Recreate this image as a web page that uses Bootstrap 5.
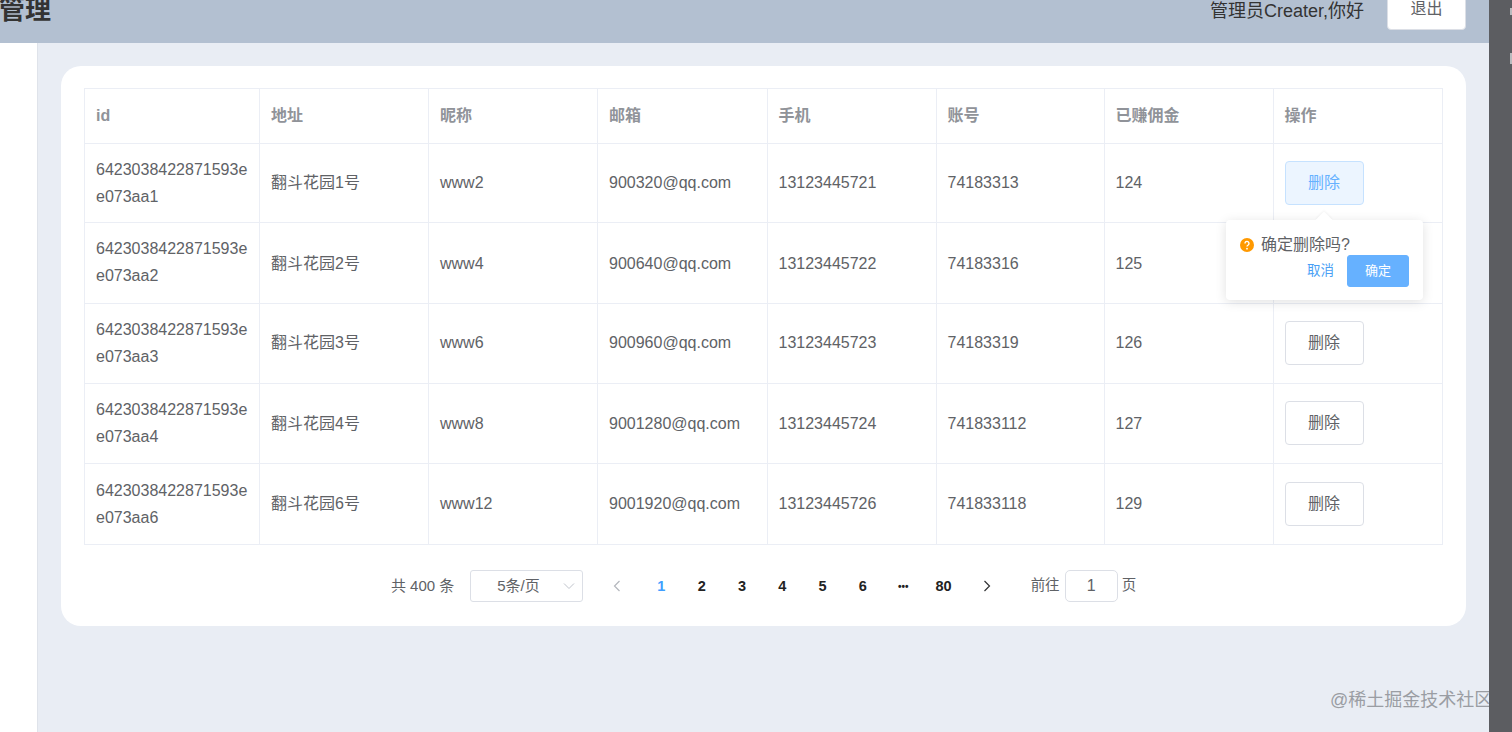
<!DOCTYPE html>
<html lang="zh-CN">
<head>
<meta charset="utf-8">
<title>管理</title>
<link rel="stylesheet" href="https://cdn.jsdelivr.net/npm/bootstrap@5.3.0/dist/css/bootstrap.min.css">
<style>
html,body{height:732px;overflow:hidden;background:#e9edf4}
body{font-family:"Liberation Sans","Noto Sans CJK SC",sans-serif;color:#606266;font-size:16px}
.shell{height:732px}
.scroll-strip{width:23px;background:#5c5d61;flex:none;position:relative}
.strip-mark{position:absolute;right:0;width:2px;background:#b9babd}
.strip-mark.mark-one{top:8px;height:7px}
.strip-mark.mark-two{top:53px;height:11px}
.page-col{width:1489px;flex:none;height:749px;margin-top:-17px}
.top-bar{height:60px;background:#b3c0d1;padding:0 23px 0 0;flex:none}
.brand-title{font-size:26px;font-weight:700;color:#333;margin:0 0 0 -1px;line-height:32px;padding-top:11px}
.greeting{font-size:18px;color:#333;margin:15px 23px 0 0}
.logout-btn{width:79px;height:47px;background:#fff;border:1px solid #dcdfe6;border-radius:4px;font-size:16px;color:#606266;padding:5px 0 0}
.side-rail{width:38px;background:#fff;border-right:1px solid #dfe3ea;flex:none}
.main-pane{padding:23px 23px 23px 23px;flex:1;min-width:0;position:relative}
.panel{background:#fff;border-radius:20px;width:1405px;height:560px;padding:22px 23px 0;position:relative}
.data-table{--bs-table-border-color:#ebeef5;--bs-table-color:#606266;table-layout:fixed;width:1358px;margin:0;font-size:16px;line-height:27px}
.data-table th{color:#909399;font-weight:700;height:55px;padding:0 11px 2px;vertical-align:middle}
.data-table td{height:80px;padding:0 11px 0;vertical-align:middle;word-break:break-all}
.data-table tbody tr:nth-child(1) td{height:79px;padding-bottom:2px}
.data-table tbody tr:nth-child(2) td{height:81px}
.data-table tbody tr:nth-child(3) td{padding-bottom:2px}
.data-table tbody tr:nth-child(5) td{height:81px;padding-bottom:2px}
.data-table tbody tr:nth-child(2) td:first-child,.data-table tbody tr:nth-child(4) td:first-child{padding-bottom:2px}
.data-table tbody tr:nth-child(1) td:first-child,.data-table tbody tr:nth-child(5) td:first-child{padding-bottom:0}
.data-table tbody tr:nth-child(4) td:last-child{padding-bottom:2px}
.data-table tbody tr:nth-child(1) td:last-child,.data-table tbody tr:nth-child(5) td:last-child{padding-bottom:0}
.col-a{width:175px}.col-b{width:169px}.col-c{width:169.5px}.col-d{width:168px}
.del-btn{width:79px;height:44px;background:#fff;border:1px solid #dcdfe6;border-radius:4px;color:#606266;font-size:16px;padding:0}
.del-btn.is-hot{background:#ecf5ff;border-color:#c6e2ff;color:#66b1ff}
.confirm-pop{position:absolute;left:1165px;top:154px;width:197px;height:80px;background:#fff;border-radius:4px;box-shadow:0 2px 12px rgba(0,0,0,.12);padding:15px 14px 0;z-index:5}
.confirm-pop::before{content:"";position:absolute;left:92px;top:-6px;width:12px;height:12px;background:#fff;transform:rotate(45deg);box-shadow:-1px -1px 2px rgba(0,0,0,.04)}
.pop-text{font-size:16px;line-height:20px;color:#606266;position:relative}
.pop-icon{width:14px;height:14px;margin-right:7px;flex:none}
.pop-actions{margin-top:0;position:relative}
.pop-cancel{color:#4a9ff5;font-size:13.5px;margin-right:13px}
.pop-ok{width:62px;height:32px;background:#66b1ff;border:1px solid #66b1ff;border-radius:3px;color:#fff;font-size:13px;padding:0}
.pager-row{height:82px;font-size:14.5px;color:#606266}
.pager-total{margin-right:16px;font-size:15px}
.size-box{width:113px;height:32px;border:1px solid #dcdfe6;border-radius:3px;padding:0 7px 0 26px;color:#606266;font-size:15px;margin-right:10px}
.pager-list{--bs-pagination-bg:transparent;--bs-pagination-border-width:0;--bs-pagination-color:#222;--bs-pagination-padding-x:0;--bs-pagination-padding-y:0;margin:0;align-items:center}
.pager-list .page-link{width:40.3px;height:32px;line-height:32px;text-align:center;font-size:14.5px;font-weight:700;color:#222;background:transparent;margin-left:0!important}
.pager-list .page-item.active .page-link{color:#409eff;background:transparent}
.pager-list .page-item:first-child .page-link{width:48px}
.pager-list .page-item:last-child .page-link{width:46px}
.pager-list .page-item .page-link svg{vertical-align:-1px}
.dots-glyph{font-size:10px;letter-spacing:0;vertical-align:1px}
.jump-box{margin-left:21px}
.jump-input{width:53px;height:32px;border:1px solid #dcdfe6;border-radius:5px;text-align:center;padding:0;font-size:16px;color:#606266;margin:0 4px 0 5px}
.watermark{position:absolute;left:1330px;top:688px;font-size:18px;line-height:24px;color:#9a9da3;white-space:nowrap;width:159px;overflow:hidden;z-index:6}
</style>
</head>
<body>
<div class="shell d-flex position-relative">
  <div class="page-col d-flex flex-column">
    <header class="top-bar d-flex align-items-start justify-content-between">
      <h1 class="brand-title">管理</h1>
      <div class="d-flex align-items-start">
        <span class="greeting">管理员Creater,你好</span>
        <button class="btn logout-btn" type="button">退出</button>
      </div>
    </header>
    <div class="d-flex flex-grow-1">
      <aside class="side-rail"></aside>
      <main class="main-pane">
        <div class="panel">
          <table class="table table-bordered data-table">
            <colgroup><col class="col-a"><col class="col-b"><col class="col-b"><col class="col-c"><col class="col-b"><col class="col-d"><col class="col-b"><col class="col-c"></colgroup>
            <thead><tr><th>id</th><th>地址</th><th>昵称</th><th>邮箱</th><th>手机</th><th>账号</th><th>已赚佣金</th><th>操作</th></tr></thead>
            <tbody>
              <tr><td>6423038422871593ee073aa1</td><td>翻斗花园1号</td><td>www2</td><td>900320@qq.com</td><td>13123445721</td><td>74183313</td><td>124</td><td><button class="btn del-btn is-hot" type="button">删除</button></td></tr>
              <tr><td>6423038422871593ee073aa2</td><td>翻斗花园2号</td><td>www4</td><td>900640@qq.com</td><td>13123445722</td><td>74183316</td><td>125</td><td><button class="btn del-btn" type="button">删除</button></td></tr>
              <tr><td>6423038422871593ee073aa3</td><td>翻斗花园3号</td><td>www6</td><td>900960@qq.com</td><td>13123445723</td><td>74183319</td><td>126</td><td><button class="btn del-btn" type="button">删除</button></td></tr>
              <tr><td>6423038422871593ee073aa4</td><td>翻斗花园4号</td><td>www8</td><td>9001280@qq.com</td><td>13123445724</td><td>741833112</td><td>127</td><td><button class="btn del-btn" type="button">删除</button></td></tr>
              <tr><td>6423038422871593ee073aa6</td><td>翻斗花园6号</td><td>www12</td><td>9001920@qq.com</td><td>13123445726</td><td>741833118</td><td>129</td><td><button class="btn del-btn" type="button">删除</button></td></tr>
            </tbody>
          </table>
          <div class="confirm-pop">
            <div class="pop-text d-flex align-items-center">
              <svg class="pop-icon" viewBox="0 0 14 14"><circle cx="7" cy="7" r="7" fill="#ff9900"/><path d="M5 5.4a2 2 0 1 1 3.2 1.6c-.8.5-1.2.9-1.2 1.6" fill="none" stroke="#fff" stroke-width="1.4"/><circle cx="7" cy="10.7" r=".9" fill="#fff"/></svg>
              <span>确定删除吗?</span>
            </div>
            <div class="pop-actions d-flex justify-content-end align-items-center">
              <span class="pop-cancel">取消</span>
              <button class="btn pop-ok" type="button">确定</button>
            </div>
          </div>
          <div class="pager-row d-flex align-items-center justify-content-center">
            <span class="pager-total">共 400 条</span>
            <div class="size-box d-flex align-items-center justify-content-between">
              <span>5条/页</span>
              <svg width="12" height="8" viewBox="0 0 12 8"><path d="M1 1.5l5 5 5-5" fill="none" stroke="#c0c4cc" stroke-width="1"/></svg>
            </div>
            <ul class="pagination pager-list">
              <li class="page-item disabled"><span class="page-link"><svg width="8" height="12" viewBox="0 0 8 12"><path d="M6.5 1L1.5 6l5 5" fill="none" stroke="#b4b7bd" stroke-width="1.2"/></svg></span></li>
              <li class="page-item active"><span class="page-link">1</span></li>
              <li class="page-item"><span class="page-link">2</span></li>
              <li class="page-item"><span class="page-link">3</span></li>
              <li class="page-item"><span class="page-link">4</span></li>
              <li class="page-item"><span class="page-link">5</span></li>
              <li class="page-item"><span class="page-link">6</span></li>
              <li class="page-item"><span class="page-link"><span class="dots-glyph">•••</span></span></li>
              <li class="page-item"><span class="page-link">80</span></li>
              <li class="page-item"><span class="page-link"><svg width="8" height="12" viewBox="0 0 8 12"><path d="M1.5 1l5 5-5 5" fill="none" stroke="#303133" stroke-width="1.2"/></svg></span></li>
            </ul>
            <div class="jump-box d-flex align-items-center">
              <span>前往</span>
              <input class="jump-input" type="text" value="1" aria-label="页码">
              <span>页</span>
            </div>
          </div>
        </div>
      </main>
    </div>
  </div>
  <div class="scroll-strip"><span class="strip-mark mark-one"></span><span class="strip-mark mark-two"></span></div>
  <div class="watermark">@稀土掘金技术社区</div>
</div>
</body>
</html>
